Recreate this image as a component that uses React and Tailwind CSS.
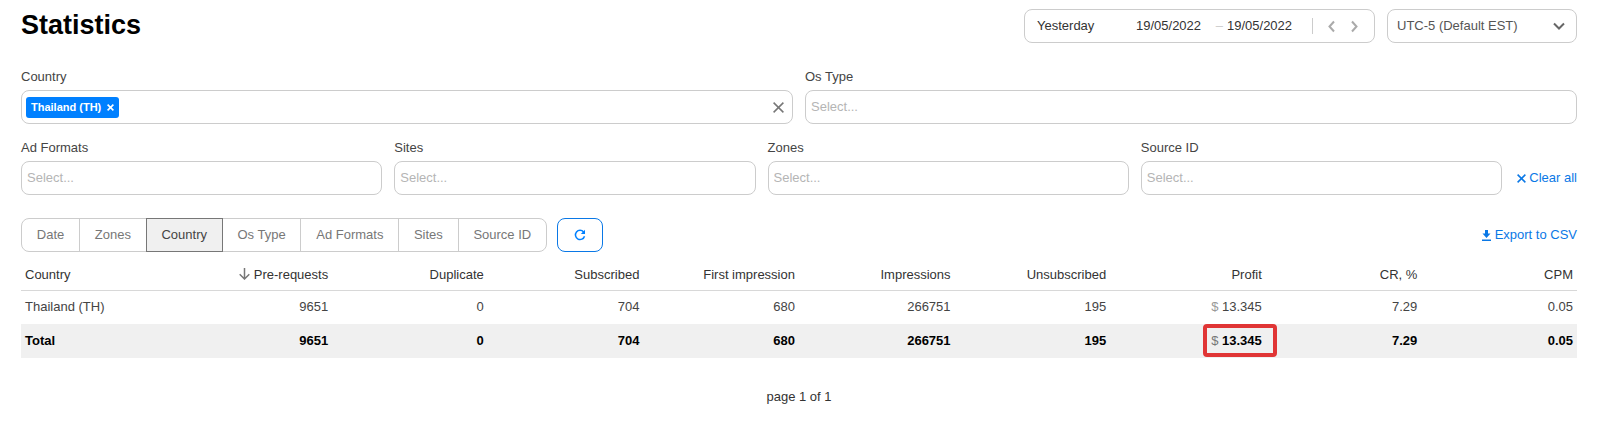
import React, { useState } from "react";

const columns = [
  "Country",
  "Pre-requests",
  "Duplicate",
  "Subscribed",
  "First impression",
  "Impressions",
  "Unsubscribed",
  "Profit",
  "CR, %",
  "CPM",
];

const values = ["9651", "0", "704", "680", "266751", "195", "13.345", "7.29", "0.05"];

const groups = ["Date", "Zones", "Country", "Os Type", "Ad Formats", "Sites", "Source ID"];

const PROFIT = 6;

const App = () => {
  const [group, setGroup] = useState("Country");
  const [countries, setCountries] = useState(["Thailand (TH)"]);

  return (
    <div className="bg-white pt-[9px] pr-[23px] pb-8 pl-[21px] font-['Liberation_Sans',Arial,sans-serif] text-[13px] leading-4 text-[#444]">
      {/* Top Section */}
      <header className="flex items-start justify-between">
        <h1 className="text-[27px] leading-8 font-bold text-black">Statistics</h1>
        <div className="flex gap-3">
          <div className="flex h-[34px] w-[351px] items-center rounded-lg border border-[#ccc] pl-3 text-[#333]">
            <button type="button" className="w-[99px] text-left">Yesterday</button>
            <input aria-label="From" defaultValue="19/05/2022" className="w-[68px] outline-none" />
            <span className="w-[23px] pr-1 text-right text-[#ccc]">–</span>
            <input aria-label="To" defaultValue="19/05/2022" className="w-[68px] outline-none" />
            <span className="ml-[17px] h-4 w-px bg-[#ccc]" />
            <button type="button" aria-label="Previous" className="ml-[14px]">
              <Chevron d="M7 1.500 2.500 6.500 7 11.500" />
            </button>
            <button type="button" aria-label="Next" className="ml-[14px]">
              <Chevron d="M2 1.500 6.500 6.500 2 11.500" />
            </button>
          </div>
          <div className="relative w-[190px]">
            <select
              aria-label="Time zone"
              className="h-[34px] w-full appearance-none rounded-lg border border-[#ccc] pl-[9px] text-[#555] outline-none"
            >
              <option>UTC-5 (Default EST)</option>
            </select>
            <svg
              className="pointer-events-none absolute top-[13px] right-3"
              width="12"
              height="9"
              viewBox="0 0 12 9"
              fill="none"
              stroke="#666"
              strokeWidth="2"
            >
              <path d="M1 1.500 6 6.500 11 1.500" />
            </svg>
          </div>
        </div>
      </header>

      {/* Filters */}
      <div className="mt-[26px] grid grid-cols-2 gap-3">
        <div>
          <label htmlFor="country" className="block">Country</label>
          <div className="mt-[5px] flex h-[34px] items-center rounded-lg border border-[#ccc] pr-2 pl-1">
            {countries.map((c) => (
              <span
                key={c}
                className="flex h-[21px] items-center gap-[6px] rounded-[3px] bg-[#0080ff] px-[5px] text-[11px] font-bold whitespace-nowrap text-white"
              >
                {c}
                <button type="button" aria-label={`Remove ${c}`} onClick={() => setCountries([])}>
                  <Cross size={7} width={1.6} />
                </button>
              </span>
            ))}
            <input id="country" className="min-w-0 flex-1 px-1 outline-none" />
            <button type="button" aria-label="Clear country" className="text-[#777]" onClick={() => setCountries([])}>
              <Cross size={11} width={1.5} />
            </button>
          </div>
        </div>
        <Filter id="os" label="Os Type" />
      </div>
      <div className="mt-4 flex items-end">
        <div className="grid flex-1 grid-cols-4 gap-3">
          <Filter id="formats" label="Ad Formats" />
          <Filter id="sites" label="Sites" />
          <Filter id="zones" label="Zones" />
          <Filter id="source" label="Source ID" />
        </div>
        <button type="button" className="flex h-[34px] w-[75px] items-center justify-end gap-[3px] text-[#0a78e6]">
          <Cross size={9} width={1.5} />
          Clear all
        </button>
      </div>

      {/* Grouping */}
      <div className="mt-[23px] flex items-center">
        <div className="flex w-[526px]">
          {groups.map((g) => (
            <button
              key={g}
              type="button"
              onClick={() => setGroup(g)}
              className={`-ml-px h-[34px] flex-auto border px-[14px] whitespace-nowrap first:ml-0 first:rounded-l-lg last:rounded-r-lg ${
                g === group ? "z-10 border-[#777] bg-[#f0f0f0] text-[#444]" : "border-[#ccc] text-[#777]"
              }`}
            >
              {g}
            </button>
          ))}
        </div>
        <button
          type="button"
          aria-label="Refresh"
          className="ml-[10px] flex h-[34px] w-[46px] items-center justify-center rounded-lg border border-[#0a78e6] text-[#0080ff]"
        >
          <svg width="12" height="12" viewBox="0 0 12 12" fill="none" stroke="currentColor" strokeWidth="1.500">
            <path d="M10.500 7.200A4.600 4.600 0 1 1 9.600 3" />
            <path d="M11 .8V5H6.800Z" fill="currentColor" stroke="none" />
          </svg>
        </button>
        <a href="#export" className="ml-auto flex items-center gap-1 text-[#0a78e6]">
          <svg width="9" height="11" viewBox="0 0 9 11" fill="currentColor">
            <path d="M3 0h3v3.500h2.500L4.500 8 .5 3.500H3ZM0 9.500h9V11H0Z" />
          </svg>
          Export to CSV
        </a>
      </div>

      <table className="mt-[5px] w-full table-fixed text-right">
        <thead>
          <tr className="h-[33px] border-b border-[#d8d8d8]">
            {columns.map((c, i) => (
              <th key={c} scope="col" className="px-1 pt-1 font-normal text-[#333] first:text-left">
                {i === 1 && (
                  <svg
                    className="mr-1 inline-block align-[-1px]"
                    width="11"
                    height="12"
                    viewBox="0 0 11 12"
                    fill="none"
                    stroke="#777"
                    strokeWidth="1.500"
                  >
                    <path d="M5.500 0V11M.7 6.200 5.500 11 10.300 6.200" />
                  </svg>
                )}
                {c}
              </th>
            ))}
          </tr>
        </thead>
        <tbody>
          <tr className="h-[34px]">
            <td className="px-1 text-left">Thailand (TH)</td>
            {values.map((v, i) => (
              <td key={i} className="px-1">
                {i === PROFIT && <span className="text-[#999]">$ </span>}
                {v}
              </td>
            ))}
          </tr>
          <tr className="h-[34px] bg-[#f0f0f0] font-bold text-black">
            <td className="px-1 text-left">Total</td>
            {values.map((v, i) => (
              <td key={i} className="px-1">
                {i === PROFIT ? (
                  <span className="relative">
                    <span className="font-normal text-[#777]">$ </span>
                    {v}
                    <span className="absolute -top-[9px] -right-[15px] -bottom-[9px] -left-[8px] rounded-[4px] border-4 border-[#e03535]" />
                  </span>
                ) : (
                  v
                )}
              </td>
            ))}
          </tr>
        </tbody>
      </table>

      <p className="mt-[31px] text-center text-[#333]">page 1 of 1</p>
    </div>
  );
};

const Filter = ({ id, label }) => (
  <div>
    <label htmlFor={id} className="block">{label}</label>
    <input
      id={id}
      placeholder="Select..."
      className="mt-[5px] h-[34px] w-full rounded-lg border border-[#ccc] px-[5px] pb-[2px] outline-none placeholder:text-[#b5b5b5]"
    />
  </div>
);

const Cross = ({ size, width }) => (
  <svg
    className="block"
    width={size}
    height={size}
    viewBox={`0 0 ${size} ${size}`}
    fill="none"
    stroke="currentColor"
    strokeWidth={width}
  >
    <path d={`M.6.6 ${size - 0.6} ${size - 0.6}M${size - 0.6}.6.6 ${size - 0.6}`} />
  </svg>
);

const Chevron = ({ d }) => (
  <svg className="block" width="9" height="13" viewBox="0 0 9 13" fill="none" stroke="#aaa" strokeWidth="2">
    <path d={d} />
  </svg>
);

export default App;
